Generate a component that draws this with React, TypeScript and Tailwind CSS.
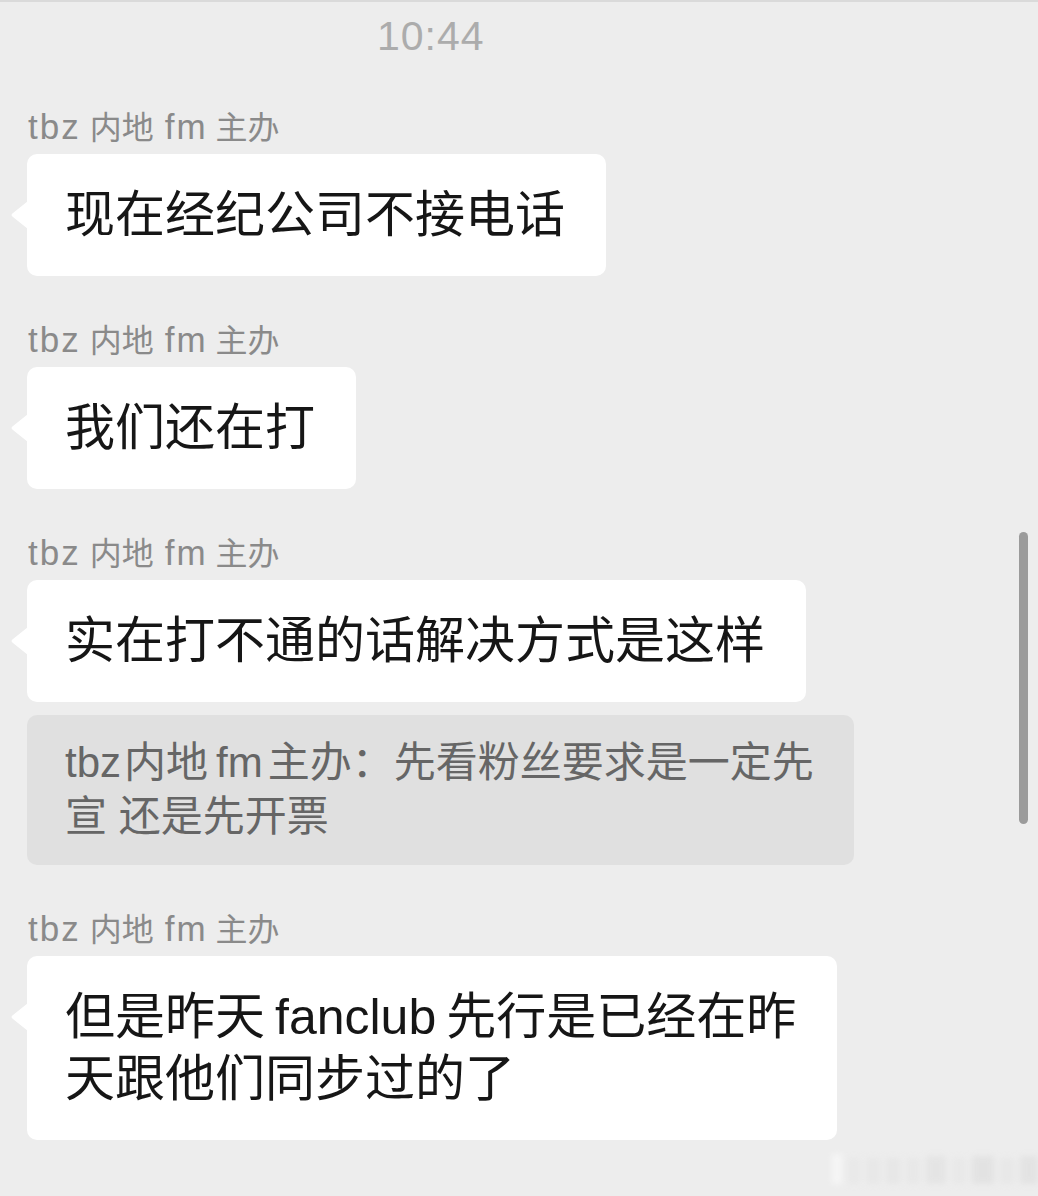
import React from "react";

const FONT = '"Liberation Sans", "Noto Sans CJK SC", sans-serif';

function Tail() {
  return (
    <svg
      className="absolute left-[-17px] top-[47px]"
      width="18"
      height="28"
      viewBox="0 0 18 28"
    >
      <path d="M18 0 L18 28 L3 16 Q0 14 3 12 Z" fill="#ffffff" />
    </svg>
  );
}

function Name() {
  return (
    <div className="mt-[46px] mb-[9px] h-[36px] pl-[28px] text-[32px] leading-[36px] text-[#8a8a8a] whitespace-nowrap">
      <span className="text-[35px] tracking-[2px]">tbz</span>
      <span className="ml-[9px]">内地</span>
      <span className="ml-[11px] text-[35px] tracking-[2px]">fm</span>
      <span className="ml-[8px]">主办</span>
    </div>
  );
}

function Bubble({ children }: { children: React.ReactNode }) {
  return (
    <div className="ml-[27px] relative w-fit bg-white rounded-[10px] pl-[38px] pr-[41px] py-[30px] text-[50px] leading-[62px] text-[#161616]">
      <Tail />
      {children}
    </div>
  );
}

export default function App() {
  return (
    <div
      className="relative w-[1038px] h-[1196px] overflow-hidden bg-[#ededed] border-t-2 border-[#dadada]"
      style={{ fontFamily: FONT }}
    >
      <div className="pt-[12px] pl-[377px] text-left text-[41px] leading-[44px] tracking-[1px] text-[#acacac]">
        10:44
      </div>
      <div className="flex flex-col">
        <div className="mt-[5px]" />
        <Name />
        <Bubble>
          <div className="whitespace-nowrap">现在经纪公司不接电话</div>
        </Bubble>
        <Name />
        <Bubble>
          <div className="whitespace-nowrap">我们还在打</div>
        </Bubble>
        <Name />
        <Bubble>
          <div className="whitespace-nowrap">实在打不通的话解决方式是这样</div>
        </Bubble>
        <div className="ml-[27px] mt-[13px] w-[827px] bg-[#e0e0e0] rounded-[10px] pl-[38px] pr-[30px] py-[21px] text-[42px] leading-[54px] text-[#666666]">
          <div className="whitespace-nowrap">
            <span>tbz</span>
            <span className="ml-[3px]">内地</span>
            <span className="ml-[8px]">fm</span>
            <span className="ml-[5px]">主办：先看粉丝要求是一定先</span>
          </div>
          <div className="whitespace-nowrap">宣 还是先开票</div>
        </div>
        <Name />
        <Bubble>
          <div className="whitespace-nowrap">
            但是昨天<span className="mx-[10px]">fanclub</span>先行是已经在昨
          </div>
          <div className="whitespace-nowrap">天跟他们同步过的了</div>
        </Bubble>
      </div>

      {/* scrollbar */}
      <div className="absolute left-[1019px] top-[530px] w-[9px] h-[292px] rounded-full bg-[#9b9b9b]" />

      {/* blurred watermark */}
      <div className="absolute left-[832px] top-[1152px] flex items-end gap-[6px] blur-[3px] opacity-50">
        <div className="w-[10px] h-[30px] bg-white" />
        <div className="w-[12px] h-[26px] bg-[#e4e4e4]" />
        <div className="w-[14px] h-[26px] bg-[#e2e2e2]" />
        <div className="w-[14px] h-[26px] bg-[#e0e0e0]" />
        <div className="w-[14px] h-[26px] bg-[#e3e3e3]" />
        <div className="w-[20px] h-[28px] bg-[#dcdcdc]" />
        <div className="w-[14px] h-[26px] bg-[#e4e4e4]" />
        <div className="w-[22px] h-[28px] bg-[#d8d8d8]" />
        <div className="w-[14px] h-[26px] bg-[#e2e2e2]" />
        <div className="w-[18px] h-[28px] bg-[#d9d9d9]" />
      </div>
    </div>
  );
}
